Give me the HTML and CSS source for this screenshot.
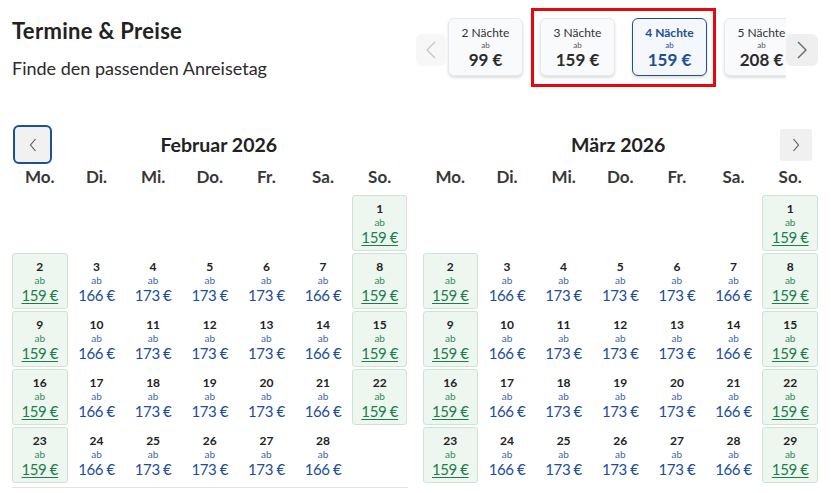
FILE: index.html
```html
<!DOCTYPE html>
<html lang="de">
<head>
<meta charset="utf-8">
<title>Termine &amp; Preise</title>
<link rel="stylesheet" href="styles.css">
</head>
<body>
<div class="page">
  <div class="top">
    <div class="intro">
      <h1 class="title">Termine &amp; Preise</h1>
      <p class="subtitle">Finde den passenden Anreisetag</p>
    </div>
    <div class="carousel">
      <button class="car-arrow car-arrow--prev" aria-label="zurück">
        <svg width="12" height="20" viewBox="0 0 12 20"><polyline points="10,2 2,10 10,18" fill="none" stroke="#c8c8c8" stroke-width="1.4"/></svg>
      </button>
      <div class="car-view">
        <div class="car-track">
          <div class="night"><span class="night__label">2 Nächte</span><span class="night__ab">ab</span><span class="night__price">99 €</span></div>
          <div class="night"><span class="night__label">3 Nächte</span><span class="night__ab">ab</span><span class="night__price">159 €</span></div>
          <div class="night night--active"><span class="night__label">4 Nächte</span><span class="night__ab">ab</span><span class="night__price">159 €</span></div>
          <div class="night"><span class="night__label">5 Nächte</span><span class="night__ab">ab</span><span class="night__price">208 €</span></div>
        </div>
      </div>
      <button class="car-arrow car-arrow--next" aria-label="weiter">
        <svg width="12" height="20" viewBox="0 0 12 20"><polyline points="2,2 10,10 2,18" fill="none" stroke="#666" stroke-width="1.4"/></svg>
      </button>
      <div class="mark"></div>
    </div>
  </div>

  <div class="calendars">
    <section class="cal">
      <div class="cal__head">
        <button class="cal__btn cal__btn--focus" aria-label="vorheriger Monat">
          <svg width="8" height="14" viewBox="0 0 8 14"><polyline points="6.5,1 1.5,7 6.5,13" fill="none" stroke="#555" stroke-width="1.1"/></svg>
        </button>
        <h2 class="cal__title cal__title--feb">Februar 2026</h2>
        <span class="cal__spacer"></span>
      </div>
      <div class="cal__grid">
        <div class="wd">Mo.</div><div class="wd">Di.</div><div class="wd">Mi.</div><div class="wd">Do.</div><div class="wd">Fr.</div><div class="wd">Sa.</div><div class="wd">So.</div>
      </div>
      <div class="cal__days">
        <div class="day day--empty"></div><div class="day day--empty"></div><div class="day day--empty"></div><div class="day day--empty"></div><div class="day day--empty"></div><div class="day day--empty"></div>
        <div class="day day--low"><span class="day__num">1</span><span class="day__ab">ab</span><span class="day__price">159 €</span></div>

        <div class="day day--low"><span class="day__num">2</span><span class="day__ab">ab</span><span class="day__price">159 €</span></div>
        <div class="day"><span class="day__num">3</span><span class="day__ab">ab</span><span class="day__price">166 €</span></div>
        <div class="day"><span class="day__num">4</span><span class="day__ab">ab</span><span class="day__price">173 €</span></div>
        <div class="day"><span class="day__num">5</span><span class="day__ab">ab</span><span class="day__price">173 €</span></div>
        <div class="day"><span class="day__num">6</span><span class="day__ab">ab</span><span class="day__price">173 €</span></div>
        <div class="day"><span class="day__num">7</span><span class="day__ab">ab</span><span class="day__price">166 €</span></div>
        <div class="day day--low"><span class="day__num">8</span><span class="day__ab">ab</span><span class="day__price">159 €</span></div>

        <div class="day day--low"><span class="day__num">9</span><span class="day__ab">ab</span><span class="day__price">159 €</span></div>
        <div class="day"><span class="day__num">10</span><span class="day__ab">ab</span><span class="day__price">166 €</span></div>
        <div class="day"><span class="day__num">11</span><span class="day__ab">ab</span><span class="day__price">173 €</span></div>
        <div class="day"><span class="day__num">12</span><span class="day__ab">ab</span><span class="day__price">173 €</span></div>
        <div class="day"><span class="day__num">13</span><span class="day__ab">ab</span><span class="day__price">173 €</span></div>
        <div class="day"><span class="day__num">14</span><span class="day__ab">ab</span><span class="day__price">166 €</span></div>
        <div class="day day--low"><span class="day__num">15</span><span class="day__ab">ab</span><span class="day__price">159 €</span></div>

        <div class="day day--low"><span class="day__num">16</span><span class="day__ab">ab</span><span class="day__price">159 €</span></div>
        <div class="day"><span class="day__num">17</span><span class="day__ab">ab</span><span class="day__price">166 €</span></div>
        <div class="day"><span class="day__num">18</span><span class="day__ab">ab</span><span class="day__price">173 €</span></div>
        <div class="day"><span class="day__num">19</span><span class="day__ab">ab</span><span class="day__price">173 €</span></div>
        <div class="day"><span class="day__num">20</span><span class="day__ab">ab</span><span class="day__price">173 €</span></div>
        <div class="day"><span class="day__num">21</span><span class="day__ab">ab</span><span class="day__price">166 €</span></div>
        <div class="day day--low"><span class="day__num">22</span><span class="day__ab">ab</span><span class="day__price">159 €</span></div>

        <div class="day day--low"><span class="day__num">23</span><span class="day__ab">ab</span><span class="day__price">159 €</span></div>
        <div class="day"><span class="day__num">24</span><span class="day__ab">ab</span><span class="day__price">166 €</span></div>
        <div class="day"><span class="day__num">25</span><span class="day__ab">ab</span><span class="day__price">173 €</span></div>
        <div class="day"><span class="day__num">26</span><span class="day__ab">ab</span><span class="day__price">173 €</span></div>
        <div class="day"><span class="day__num">27</span><span class="day__ab">ab</span><span class="day__price">173 €</span></div>
        <div class="day"><span class="day__num">28</span><span class="day__ab">ab</span><span class="day__price">166 €</span></div>
        <div class="day day--empty"></div>
      </div>
      <div class="cal__divider"></div>
    </section>

    <section class="cal">
      <div class="cal__head">
        <span class="cal__spacer"></span>
        <h2 class="cal__title cal__title--mar">März 2026</h2>
        <button class="cal__btn" aria-label="nächster Monat">
          <svg width="8" height="14" viewBox="0 0 8 14"><polyline points="1.5,1 6.5,7 1.5,13" fill="none" stroke="#555" stroke-width="1.1"/></svg>
        </button>
      </div>
      <div class="cal__grid">
        <div class="wd">Mo.</div><div class="wd">Di.</div><div class="wd">Mi.</div><div class="wd">Do.</div><div class="wd">Fr.</div><div class="wd">Sa.</div><div class="wd">So.</div>
      </div>
      <div class="cal__days">
        <div class="day day--empty"></div><div class="day day--empty"></div><div class="day day--empty"></div><div class="day day--empty"></div><div class="day day--empty"></div><div class="day day--empty"></div>
        <div class="day day--low"><span class="day__num">1</span><span class="day__ab">ab</span><span class="day__price">159 €</span></div>

        <div class="day day--low"><span class="day__num">2</span><span class="day__ab">ab</span><span class="day__price">159 €</span></div>
        <div class="day"><span class="day__num">3</span><span class="day__ab">ab</span><span class="day__price">166 €</span></div>
        <div class="day"><span class="day__num">4</span><span class="day__ab">ab</span><span class="day__price">173 €</span></div>
        <div class="day"><span class="day__num">5</span><span class="day__ab">ab</span><span class="day__price">173 €</span></div>
        <div class="day"><span class="day__num">6</span><span class="day__ab">ab</span><span class="day__price">173 €</span></div>
        <div class="day"><span class="day__num">7</span><span class="day__ab">ab</span><span class="day__price">166 €</span></div>
        <div class="day day--low"><span class="day__num">8</span><span class="day__ab">ab</span><span class="day__price">159 €</span></div>

        <div class="day day--low"><span class="day__num">9</span><span class="day__ab">ab</span><span class="day__price">159 €</span></div>
        <div class="day"><span class="day__num">10</span><span class="day__ab">ab</span><span class="day__price">166 €</span></div>
        <div class="day"><span class="day__num">11</span><span class="day__ab">ab</span><span class="day__price">173 €</span></div>
        <div class="day"><span class="day__num">12</span><span class="day__ab">ab</span><span class="day__price">173 €</span></div>
        <div class="day"><span class="day__num">13</span><span class="day__ab">ab</span><span class="day__price">173 €</span></div>
        <div class="day"><span class="day__num">14</span><span class="day__ab">ab</span><span class="day__price">166 €</span></div>
        <div class="day day--low"><span class="day__num">15</span><span class="day__ab">ab</span><span class="day__price">159 €</span></div>

        <div class="day day--low"><span class="day__num">16</span><span class="day__ab">ab</span><span class="day__price">159 €</span></div>
        <div class="day"><span class="day__num">17</span><span class="day__ab">ab</span><span class="day__price">166 €</span></div>
        <div class="day"><span class="day__num">18</span><span class="day__ab">ab</span><span class="day__price">173 €</span></div>
        <div class="day"><span class="day__num">19</span><span class="day__ab">ab</span><span class="day__price">173 €</span></div>
        <div class="day"><span class="day__num">20</span><span class="day__ab">ab</span><span class="day__price">173 €</span></div>
        <div class="day"><span class="day__num">21</span><span class="day__ab">ab</span><span class="day__price">166 €</span></div>
        <div class="day day--low"><span class="day__num">22</span><span class="day__ab">ab</span><span class="day__price">159 €</span></div>

        <div class="day day--low"><span class="day__num">23</span><span class="day__ab">ab</span><span class="day__price">159 €</span></div>
        <div class="day"><span class="day__num">24</span><span class="day__ab">ab</span><span class="day__price">166 €</span></div>
        <div class="day"><span class="day__num">25</span><span class="day__ab">ab</span><span class="day__price">173 €</span></div>
        <div class="day"><span class="day__num">26</span><span class="day__ab">ab</span><span class="day__price">173 €</span></div>
        <div class="day"><span class="day__num">27</span><span class="day__ab">ab</span><span class="day__price">173 €</span></div>
        <div class="day"><span class="day__num">28</span><span class="day__ab">ab</span><span class="day__price">166 €</span></div>
        <div class="day day--low"><span class="day__num">29</span><span class="day__ab">ab</span><span class="day__price">159 €</span></div>
      </div>
    </section>
  </div>
</div>
</body>
</html>
```

FILE: styles.css
```css
html, body {
  margin: 0;
  padding: 0;
  overflow: hidden;
  background: #ffffff;
}

body {
  font-family: Lato, "Open Sans", "Noto Sans", sans-serif;
  color: #222222;
}

.page {
  padding: 18px 13px 0 12px;
}

.top {
  display: flex;
  justify-content: space-between;
  align-items: flex-start;
}

.title {
  margin: 0;
  font-size: 22px;
  line-height: 26px;
  letter-spacing: 0.3px;
  font-weight: 700;
  color: #222222;
}

.subtitle {
  margin: 13px 0 0 0;
  font-size: 18px;
  line-height: 22px;
  color: #2a2a2a;
}

/* nights carousel */
.carousel {
  position: relative;
  display: flex;
  align-items: flex-start;
}

.car-arrow {
  margin-top: 16px;
  height: 32px;
  border: none;
  padding: 0;
  border-radius: 6px;
  display: flex;
  align-items: center;
  justify-content: center;
}

.car-arrow--prev {
  width: 30px;
  background: #f7f7f7;
}

.car-arrow--next {
  width: 32px;
  background: #efefef;
}

.car-view {
  width: 340px;
  overflow: hidden;
  padding-bottom: 6px;
}

.car-track {
  display: flex;
  gap: 17px;
  padding-left: 2px;
}

.night {
  flex: 0 0 auto;
  box-sizing: border-box;
  width: 75px;
  height: 58px;
  padding-top: 7px;
  display: flex;
  flex-direction: column;
  align-items: center;
  background: #f9fafb;
  border: 1px solid #e7e9ec;
  border-radius: 6px;
  box-shadow: 0 2px 3px rgba(0, 0, 0, 0.13);
  color: #333333;
}

.night__label {
  font-size: 12px;
  line-height: 14px;
}

.night__ab {
  font-size: 8px;
  line-height: 10px;
  color: #555555;
}

.night__price {
  font-size: 17px;
  line-height: 20px;
  font-weight: 700;
  color: #2b2b2b;
}

.night--active {
  background: #f4f7fb;
  border-color: #1e4f93;
  color: #1e4f93;
}

.night--active .night__label {
  font-weight: 700;
}

.night--active .night__ab,
.night--active .night__price {
  color: #1e4f93;
}

.mark {
  position: absolute;
  left: 115px;
  top: -10px;
  width: 185px;
  height: 79px;
  box-sizing: border-box;
  border: 3px solid #e8070b;
  pointer-events: none;
}

/* calendars */
.calendars {
  display: flex;
  gap: 15px;
  margin-top: 43px;
}

.cal {
  flex: 1 1 0;
  min-width: 0;
}

.cal__head {
  display: flex;
  align-items: center;
  height: 39px;
}

.cal__btn {
  flex: 0 0 auto;
  width: 32px;
  height: 32px;
  padding: 0;
  border: none;
  background: #f0f0f0;
  border-radius: 2px;
  display: flex;
  align-items: center;
  justify-content: center;
}

.cal__btn--focus {
  width: 39px;
  height: 39px;
  margin-left: 1px;
  border: 2px solid #1e4f93;
  border-radius: 6px;
  background: #f1f1f1;
}

.cal__head .cal__btn:last-child {
  margin-right: 6px;
}

.cal__spacer {
  flex: 0 0 40px;
}

.cal__title {
  flex: 1 1 auto;
  margin: 0;
  text-align: center;
  font-size: 19.5px;
  line-height: 24px;
  font-weight: 700;
  color: #222222;
}

.cal__title--feb {
  padding-left: 18px;
}

.cal__title--mar {
  padding-right: 6px;
}

.cal__grid {
  display: grid;
  grid-template-columns: repeat(7, 1fr);
  column-gap: 1px;
  margin-top: 2px;
}

.wd {
  text-align: center;
  font-size: 17px;
  line-height: 22px;
  font-weight: 700;
  color: #383838;
}

.cal__days {
  display: grid;
  grid-template-columns: repeat(7, 1fr);
  grid-auto-rows: 56px;
  column-gap: 1px;
  row-gap: 2px;
  margin-top: 7px;
}

.day {
  box-sizing: border-box;
  display: flex;
  flex-direction: column;
  align-items: center;
  padding-top: 5px;
  border: 1px solid transparent;
  border-radius: 3px;
}

.day--low {
  background: #eef6f0;
  border-color: #cde3d4;
}

.day__num {
  font-size: 12px;
  line-height: 15px;
  font-weight: 700;
  color: #222222;
}

.day__ab {
  font-size: 10px;
  line-height: 12px;
  color: #3a67a6;
}

.day__price {
  font-size: 15px;
  line-height: 18px;
  color: #1b4d9b;
  letter-spacing: -0.4px;
}

.day--low .day__ab {
  color: #2e8a58;
}

.day--low .day__price {
  color: #1b7e4a;
  text-decoration: underline;
  text-decoration-thickness: 1px;
  text-underline-offset: 2px;
}

.cal__divider {
  margin-top: 4px;
  border-top: 1px solid #dfe3e6;
}
```
